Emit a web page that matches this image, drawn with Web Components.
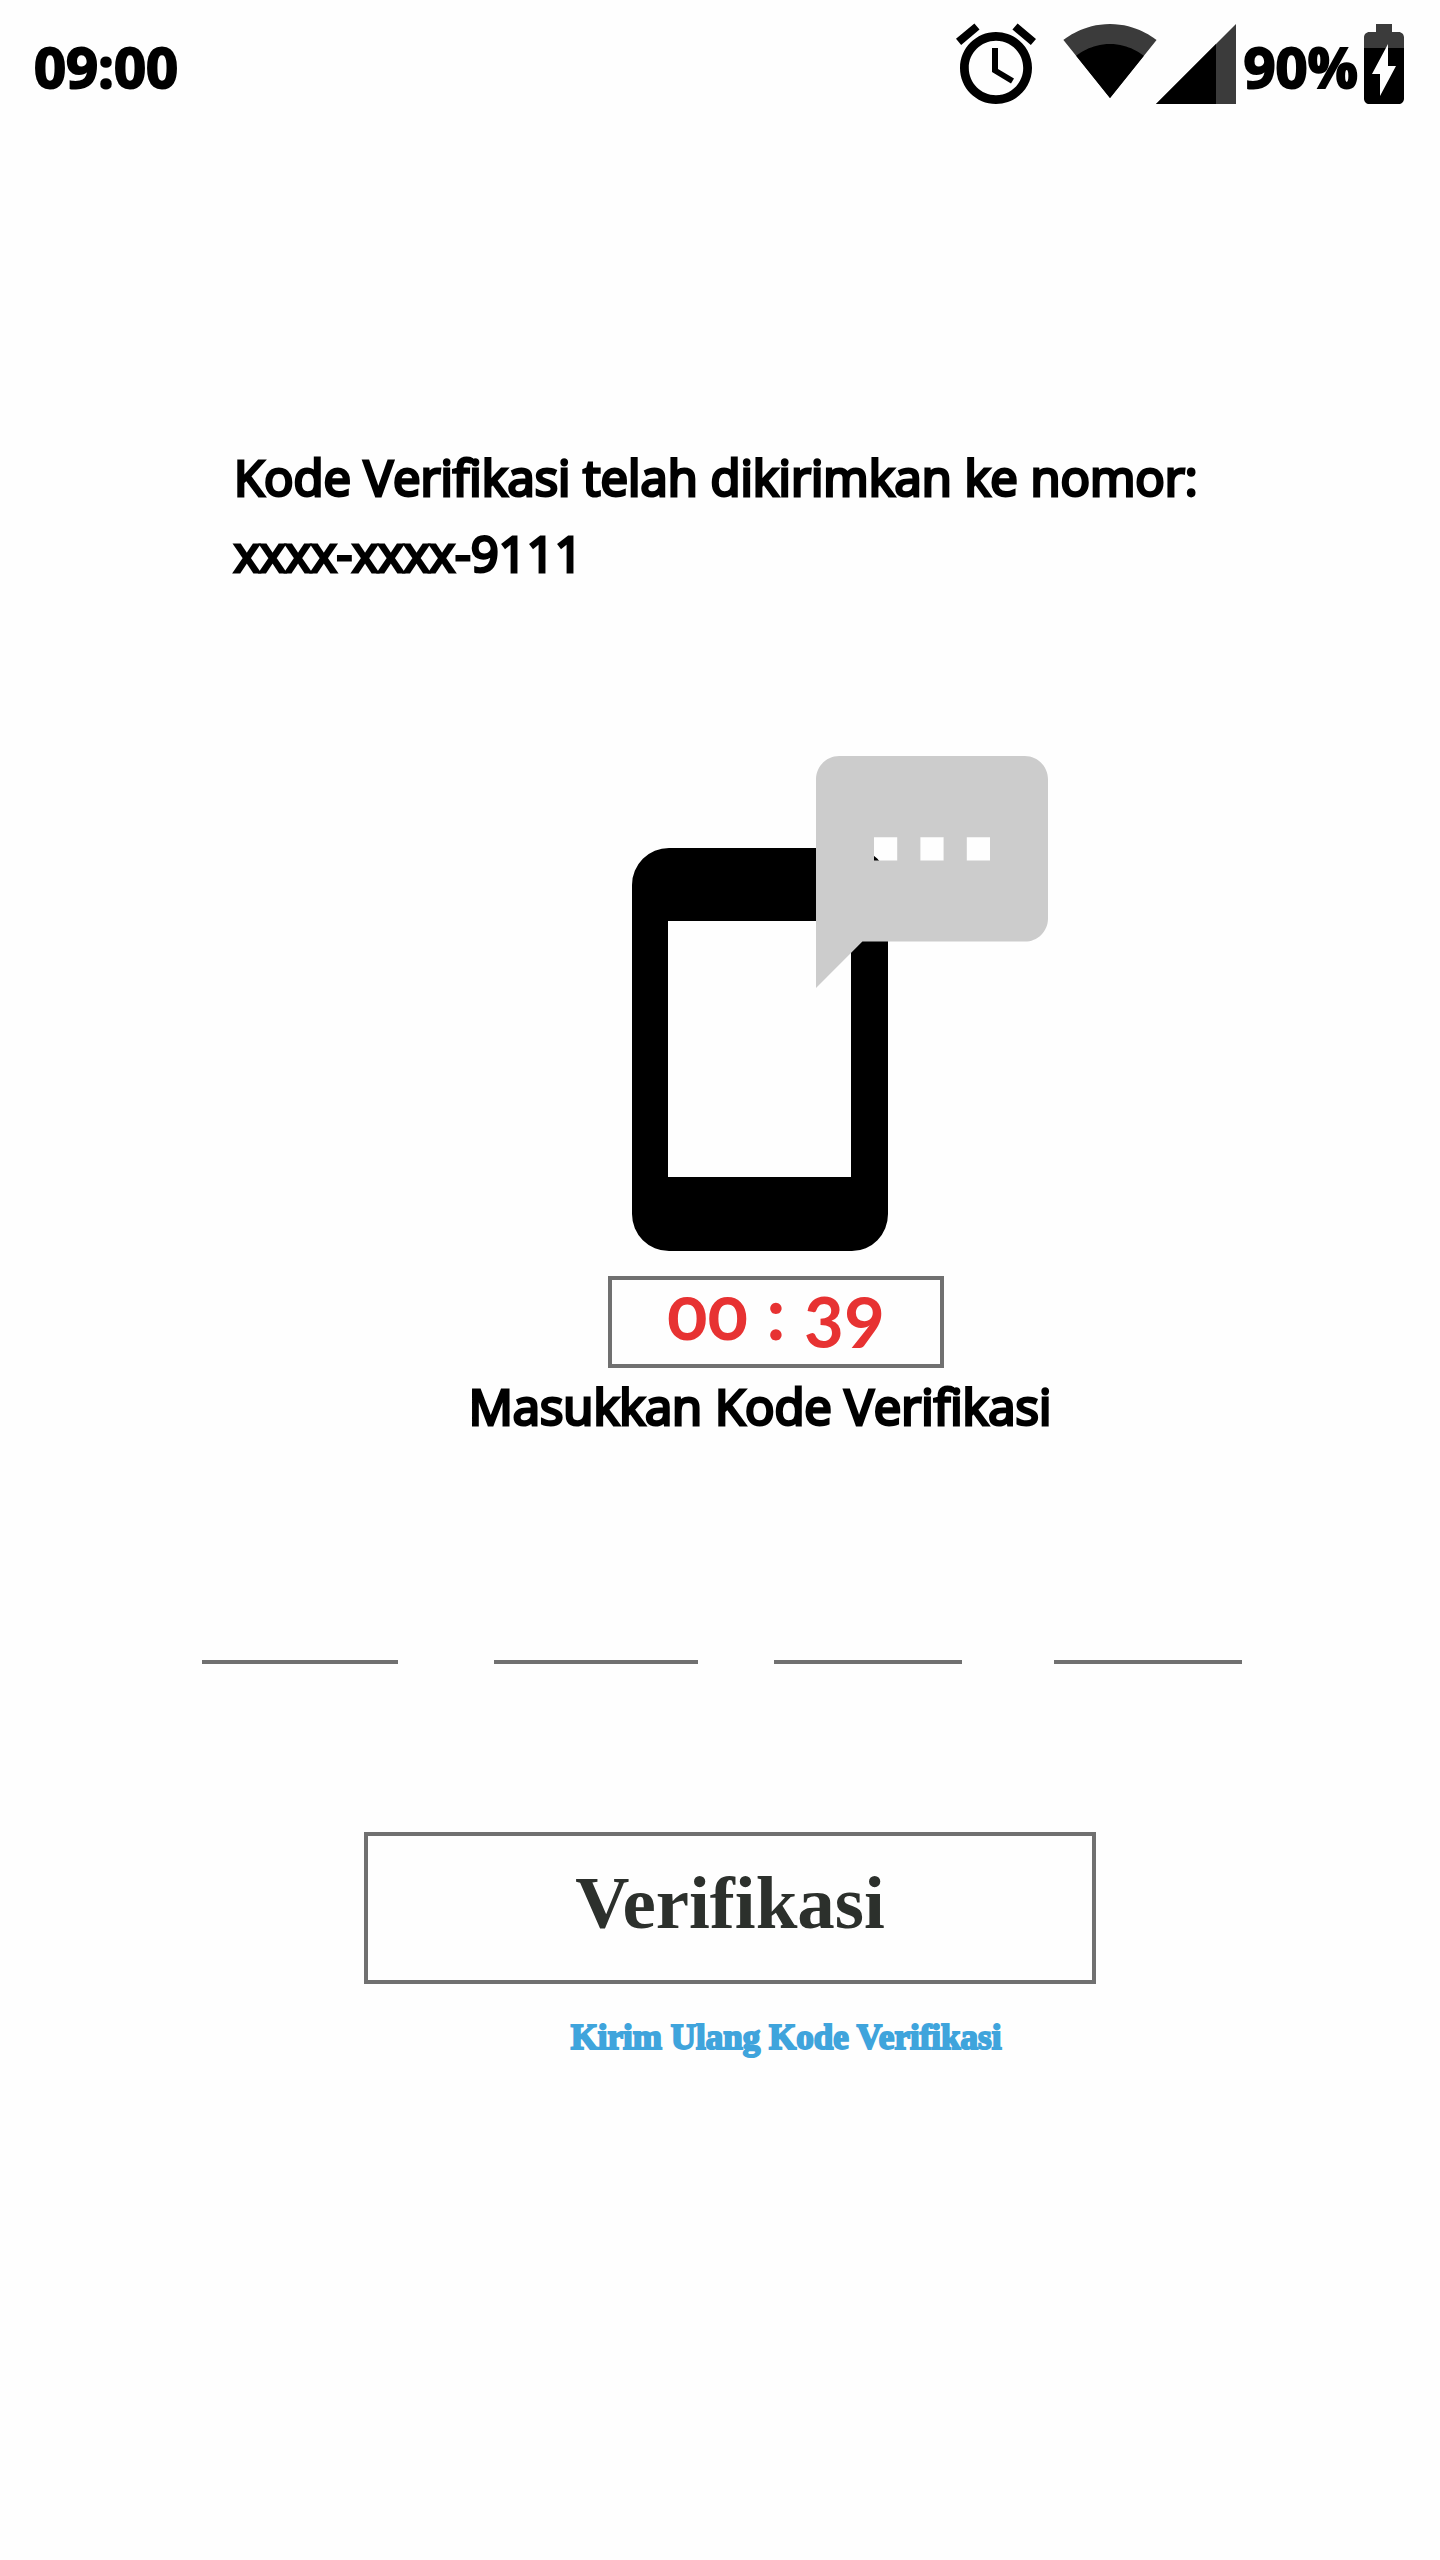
<!DOCTYPE html>
<html lang="id">
<head>
<meta charset="utf-8">
<meta name="viewport" content="width=device-width, initial-scale=1">
<title>Verifikasi</title>
<style>
  body { margin: 0; background: #fefefe; color: #000; font-family: "Open Sans", "Noto Sans", sans-serif; }
</style>
</head>
<body>
<verification-screen></verification-screen>
<script>
class ShadowElement extends HTMLElement {
  connectedCallback() {
    if (this.shadowRoot) return;
    this.attachShadow({ mode: 'open' }).innerHTML = this.constructor.markup;
  }
}

customElements.define('status-bar', class extends ShadowElement {
  static markup = `
    <style>
      :host { display: flex; justify-content: space-between; align-items: center; padding: 24px 36px 24px 34px; font-size: 56px; font-weight: 700; line-height: 76px; -webkit-text-stroke: 2px #000; }
      span { padding-top: 4px; }
      .icons { display: flex; align-items: center; height: 80px; }
      svg { display: block; height: 80px; overflow: visible; stroke: none; }
      .alarm { width: 80px; margin-right: 30px; }
      .wifi { width: 88px; margin-right: 2px; }
      .signal { width: 80px; margin-right: 8px; }
      .battery { width: 40px; margin-left: 6px; }
      .dim { fill: #3b3b3b; }
    </style>
    <span>09:00</span>
    <div class="icons">
      <svg class="alarm" viewBox="2 2 20 20" aria-hidden="true"><path d="M22 5.72l-4.6-3.86-1.29 1.53 4.6 3.86L22 5.72zM7.88 3.39L6.6 1.86 2 5.71l1.29 1.53 4.59-3.85zM12.5 8H11v6l4.75 2.85.75-1.23-4-2.37V8zM12 4c-4.97 0-9 4.03-9 9s4.02 9 9 9c4.97 0 9-4.03 9-9s-4.03-9-9-9zm0 15.8c-3.76 0-6.8-3.04-6.8-6.8s3.04-6.8 6.8-6.8 6.8 3.04 6.8 6.8-3.04 6.8-6.8 6.8z"/></svg>
      <svg class="wifi" viewBox="1 3 22 20" aria-hidden="true"><path class="dim" d="M12.01 21.49L23.64 7c-.45-.34-4.93-4-11.64-4C5.28 3 .81 6.66.36 7l11.63 14.49.01.01z"/><path d="M3.53 10.95l8.46 10.54.01.01.01-.01 8.46-10.54C20.04 10.62 16.81 8 12 8c-4.81 0-8.04 2.62-8.47 2.95z"/></svg>
      <svg class="signal" viewBox="2 2 20 20" aria-hidden="true"><path class="dim" d="M2 22h20V2z"/><path d="M17 7L2 22h15z"/></svg>
      <span>90%</span>
      <svg class="battery" viewBox="7 2 10 20" aria-hidden="true"><path class="dim" d="M15.67 4H14V2h-4v2H8.33C7.6 4 7 4.6 7 5.33V8h5.47L13 7v1h4V5.33C17 4.6 16.4 4 15.67 4z"/><path d="M13 12.5h2L11 20v-5.5H9L12.47 8H7v12.67C7 21.4 7.6 22 8.33 22h7.33c.74 0 1.34-.6 1.34-1.33V8h-4v4.5z"/></svg>
    </div>`;
});

customElements.define('screen-text', class extends ShadowElement {
  static markup = `
    <style>
      :host { display: block; font-size: 49px; line-height: 76px; -webkit-text-stroke: 3px #000; }
    </style>
    <slot></slot>`;
});

customElements.define('phone-message', class extends ShadowElement {
  static markup = `
    <style>
      :host { display: block; width: 416px; }
      svg { display: block; width: 100%; }
    </style>
    <svg viewBox="632 756 416 495" aria-hidden="true">
      <path d="M852 848H669a37 37 0 0 0-37 37v329a37 37 0 0 0 37 37h183a36 37 0 0 0 36-37V885a36 37 0 0 0-36-37zM851 1177H668V921h183z"/>
      <path fill="#ccc" transform="translate(792.8 732.8) scale(11.6)" d="M20 2H4c-1.1 0-2 .9-2 2v18l4-4h14c1.1 0 2-.9 2-2V4c0-1.1-.9-2-2-2zM9 11H7V9h2v2zm4 0h-2V9h2v2zm4 0h-2V9h2v2z"/>
    </svg>`;
});

customElements.define('count-down', class extends ShadowElement {
  static markup = `
    <style>
      :host { display: block; box-sizing: border-box; width: 336px; padding-bottom: 22px; border: 4px solid #707070; color: #e73232; font: 700 75px/62px Lato, sans-serif; font-variant-numeric: oldstyle-nums; text-align: center; }
    </style>
    <slot></slot>`;
});

customElements.define('code-input', class extends ShadowElement {
  static markup = `
    <style>
      :host { display: grid; grid-template-columns: 196fr 96fr 204fr 76fr 188fr 92fr 188fr; }
      input { box-sizing: border-box; min-width: 0; width: 100%; height: 120px; margin: 0; padding: 0; border: 0; border-bottom: 4px solid #707070; border-radius: 0; background: none; font: 56px "Open Sans", sans-serif; text-align: center; outline: 0; }
      input:nth-of-type(2) { grid-column: 3; }
      input:nth-of-type(3) { grid-column: 5; }
      input:nth-of-type(4) { grid-column: 7; }
    </style>
    <input inputmode="numeric" maxlength="1" aria-label="Digit 1">
    <input inputmode="numeric" maxlength="1" aria-label="Digit 2">
    <input inputmode="numeric" maxlength="1" aria-label="Digit 3">
    <input inputmode="numeric" maxlength="1" aria-label="Digit 4">`;
});

customElements.define('verify-button', class extends ShadowElement {
  static markup = `
    <style>
      :host { display: block; width: 732px; max-width: 100%; }
      button { display: block; box-sizing: border-box; width: 100%; margin: 0; padding: 27px 0 37px; border: 4px solid #707070; background: none; color: #2c302c; font: 700 75px/80px "Liberation Serif", serif; }
    </style>
    <button type="submit"><slot></slot></button>`;
});

customElements.define('resend-link', class extends ShadowElement {
  static markup = `
    <style>
      :host { display: block; }
      a { display: block; color: #3fa4dc; font: 700 35px/48px "Liberation Serif", serif; text-decoration: none; -webkit-text-stroke: 2px #3fa4dc; }
    </style>
    <a href="#"><slot></slot></a>`;
});

customElements.define('verification-screen', class extends ShadowElement {
  static markup = `
    <style>
      :host { display: block; min-height: 100vh; }
      main { display: flex; flex-direction: column; align-items: center; }
      .intro { align-self: stretch; padding: 311px 200px 0 234px; }
      .hero { padding: 165px 0 0 240px; }
      .timer { padding: 25px 0 0 112px; }
      .prompt { padding-left: 80px; }
      .code { align-self: stretch; padding: 100px 198px 0 202px; }
      .submit { padding: 168px 0 0 20px; }
      .resend { padding: 30px 0 0 132px; }
    </style>
    <status-bar></status-bar>
    <main>
      <div class="intro"><screen-text>Kode Verifikasi telah dikirimkan ke nomor:<br>xxxx-xxxx-9111</screen-text></div>
      <div class="hero"><phone-message></phone-message></div>
      <div class="timer"><count-down>00 : 39</count-down></div>
      <div class="prompt"><screen-text>Masukkan Kode Verifikasi</screen-text></div>
      <div class="code"><code-input></code-input></div>
      <div class="submit"><verify-button>Verifikasi</verify-button></div>
      <div class="resend"><resend-link>Kirim Ulang Kode Verifikasi</resend-link></div>
    </main>`;
});
</script>
</body>
</html>
